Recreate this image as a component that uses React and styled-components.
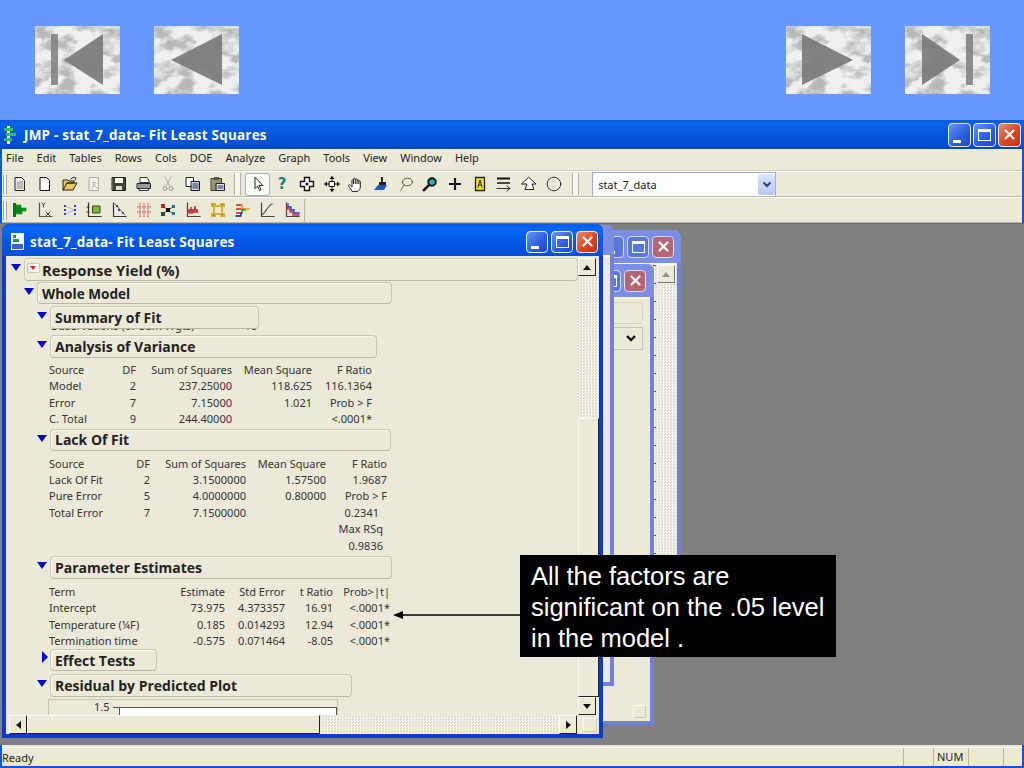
import React from "react";
import styled, { createGlobalStyle } from "styled-components";

const GlobalStyle = createGlobalStyle`
  html, body { margin: 0; padding: 0; background: #6699ff; }
  body { font-family: "Noto Sans", "Liberation Sans", sans-serif; }
`;

/* ---------- slide nav ---------- */

function Marble({ id, tri, bar }) {
  return (
    <TileSvg viewBox="0 0 85 68">
      <defs>
        <filter id={id} x="0" y="0" width="100%" height="100%">
          <feTurbulence type="fractalNoise" baseFrequency="0.05 0.08" numOctaves="5" seed="11" />
          <feColorMatrix values="0 0 0 0 0.48  0 0 0 0 0.48  0 0 0 0 0.48  3 3 0 0 -2.75" />
        </filter>
      </defs>
      <rect width="85" height="68" fill="#f0f0ef" />
      <rect width="85" height="68" filter={`url(#${id})`} />
      {bar && <rect x={bar} y="8" width="7" height="51" fill="#7d8084" opacity="0.88" />}
      <polygon points={tri} fill="#77797b" opacity="0.92" />
    </TileSvg>
  );
}

/* ---------- toolbar icons ---------- */

const S = ({ children }) => (
  <svg width="16" height="16" viewBox="0 0 16 16" fill="none" strokeLinecap="square">
    {children}
  </svg>
);

const Axes = ({ c = "#555" }) => <path d="M2.5 1v13.5H15" stroke={c} strokeWidth="1.2" />;

const tools = {
  doc: (
    <S>
      <path d="M3.5 1.5h6l3 3v10h-9z" fill="#fff" stroke="#222" />
      <path d="M5 6h6M5 8h6M5 10h6M5 12h6" stroke="#777" />
    </S>
  ),
  page: (
    <S>
      <path d="M3.5 1.5h6l3 3v10h-9z" fill="#fff" stroke="#111" />
    </S>
  ),
  open: (
    <S>
      <path d="M1 14V4h5l1 1h5v2H5l-4 7h10l4-7H5" fill="#e6c95a" stroke="#222" />
      <path d="M9 3c1-2 3-2 5-1l-1 2" stroke="#222" />
    </S>
  ),
  script: (
    <S>
      <path d="M3.5 1.5h9v13h-9z" fill="#f2f1ea" stroke="#aaa" />
      <path d="M6 12l2-3-1-3 3 1M8 9l3 3" stroke="#b9a79a" />
    </S>
  ),
  save: (
    <S>
      <path d="M1.5 1.5h13v13h-13z" fill="#44452c" stroke="#222" />
      <path d="M4 2h8v5H4z" fill="#fff" />
      <path d="M5 10h6v4H5z" fill="#ddd" />
    </S>
  ),
  print: (
    <S>
      <path d="M4.500 1.500h7l2 5h-9z" fill="#fff" stroke="#333" />
      <path d="M1.500 7.500h13v5h-13z" fill="#999" stroke="#222" />
      <path d="M3.500 12.500h9v2h-9z" fill="#eee" stroke="#333" />
    </S>
  ),
  cut: (
    <S>
      <path d="M5 1l5 9M11 1l-5 9" stroke="#aaa" />
      <circle cx="5" cy="12.500" r="2" stroke="#999" />
      <circle cx="11" cy="12.500" r="2" stroke="#999" />
    </S>
  ),
  copy: (
    <S>
      <path d="M1.500 1.500h7v9h-7z" fill="#fff" stroke="#222" />
      <path d="M6.500 5.500h8v9h-8z" fill="#d8def5" stroke="#112" />
      <path d="M8 8h5M8 10h5M8 12h5" stroke="#224" />
    </S>
  ),
  paste: (
    <S>
      <path d="M1.500 2.500h10v12h-10z" fill="#9b9468" stroke="#333" />
      <path d="M4 1h5v3H4z" fill="#555" />
      <path d="M6.500 7.500h8v7h-8z" fill="#e4e8fa" stroke="#223" />
      <path d="M8 10h5M8 12h5" stroke="#225" />
    </S>
  ),
  arrow: (
    <S>
      <path d="M5 1.500v11l2.500-2.500 2 4.500 1.500-.8-2-4.200h3.500z" fill="#fff" stroke="#222" strokeLinecap="round" strokeLinejoin="round" />
    </S>
  ),
  cross: (
    <S>
      <path d="M5.500 1.500h5v4h4v5h-4v4h-5v-4h-4v-5h4z" fill="#fff" stroke="#111" strokeWidth="1.4" />
      <circle cx="8" cy="8" r="1.600" fill="#111" />
    </S>
  ),
  move: (
    <S>
      <path d="M8 1v14M1 8h14" stroke="#111" />
      <path d="M8 0l2.500 3h-5zM8 16l2.500-3h-5zM0 8l3-2.500v5zM16 8l-3-2.500v5z" fill="#111" />
      <path d="M5.500 5.500h5v5h-5z" fill="#fff" stroke="#111" />
    </S>
  ),
  hand: (
    <S>
      <path d="M4 15c-1-2-3.500-4.500-3.500-5.500 0-1 1-1 2 0L4 11V4.500c0-1 1.500-1 1.500 0V3c0-1 1.800-1 1.800 0v.500c0-1 1.800-1 1.800 0v1c0-1 1.700-1 1.700 0V5.500c0-1 1.500-1 1.500 0V11c0 2-1 3-2 4z" fill="#fff" stroke="#222" strokeLinejoin="round" />
      <path d="M5.500 4.500V8M7.300 3.500V8M9.100 4.500V8M10.800 5.500V8" stroke="#222" strokeLinecap="butt" />
    </S>
  ),
  brush: (
    <S>
      <path d="M8 1h2v5h3v3H6V6h2z" fill="#222" />
      <path d="M5 9h9l-3 5H1z" fill="#1e4fd8" />
    </S>
  ),
  lasso: (
    <S>
      <ellipse cx="9.500" cy="6" rx="5" ry="3.800" stroke="#555" />
      <path d="M6 9.500C4 10 5 12 3 14" stroke="#555" />
    </S>
  ),
  glass: (
    <S>
      <circle cx="10" cy="6" r="3.800" fill="#18b6c2" stroke="#111" strokeWidth="1.900" />
      <path d="M7 9l-5 5" stroke="#111" strokeWidth="2.600" />
    </S>
  ),
  plus: (
    <S>
      <path d="M8 2v12M2 8h12" stroke="#111" strokeWidth="2.200" strokeLinecap="butt" />
    </S>
  ),
  annot: (
    <S>
      <path d="M3.500 1.500h9v13h-9z" fill="#f0e41c" stroke="#222" strokeWidth="1.300" />
      <path d="M6 11l2-7 2 7M6.800 9h2.400" stroke="#222" />
    </S>
  ),
  lines: (
    <S>
      <path d="M1 2.500h13" stroke="#111" strokeWidth="2" strokeLinecap="butt" />
      <path d="M1 7h13" stroke="#111" strokeWidth="1.500" strokeLinecap="butt" />
      <path d="M1 12.500h13M11 10l3 2.500-3 2.500" stroke="#333" />
    </S>
  ),
  poly: (
    <S>
      <path d="M8 1.500l7 6.500-4 0 2 5.500H4l2-5.500H1z" fill="#fff" stroke="#222" strokeLinejoin="round" />
    </S>
  ),
  circle: (
    <S>
      <circle cx="8" cy="8" r="6.800" fill="none" stroke="#333" />
    </S>
  ),
  dist: (
    <S>
      <path d="M1 1h3v14H1z" fill="#0a7a10" />
      <path d="M4 3h5v3H4zM4 6h10v3H4zM4 9h6v3H4z" fill="#0a9a14" stroke="#063" strokeWidth=".5" />
    </S>
  ),
  yx: (
    <S>
      <Axes />
      <path d="M9 10l4 4M13 10l-4 4" stroke="#444" />
      <path d="M5 1l1.500 2L8 1M6.500 3v2" stroke="#444" />
    </S>
  ),
  dots: (
    <S>
      <path d="M2 3h2v2H2zM2 11h2v2H2zM12 3h2v2h-2zM12 11h2v2h-2zM2 7h2v2H2zM12 7h2v2h-2z" fill="#3533c8" />
      <path d="M4 4l8 4-8 4" stroke="#b3b3e8" />
    </S>
  ),
  square: (
    <S>
      <Axes c="#333" />
      <path d="M7 4h7v7H7z" fill="#7dbb2d" stroke="#343" />
      <path d="M1 5h2M1 10h2" stroke="#333" />
    </S>
  ),
  points: (
    <S>
      <Axes c="#333" />
      <path d="M5 3h2v2H5zM7 7h2v2H7zM11 10h2v2h-2z" fill="#3533a8" />
      <path d="M4 2l10 11" stroke="#555" />
    </S>
  ),
  grid: (
    <S>
      <path d="M4 1v14M8 1v14M12 1v14M1 5h14M1 10h14" stroke="#c2332d" strokeDasharray="1.500 1" strokeLinecap="butt" />
    </S>
  ),
  net: (
    <S>
      <path d="M3 4l5 4 5-3M3 12l5-4 5 4" stroke="#444" />
      <path d="M1 2h4v4H1z" fill="#b22" />
      <path d="M1 10h4v4H1z" fill="#162" />
      <path d="M6 6h4v4H6z" fill="#111" />
      <path d="M12 3h3v3h-3zM12 10h3v3h-3z" fill="#17a" />
    </S>
  ),
  wave: (
    <S>
      <Axes c="#444" />
      <path d="M3 11l1-4 1 5 1-7 1 7 1-5 1 4 1-7 1 7 1-4 1 4" stroke="#c8262b" strokeLinecap="butt" />
    </S>
  ),
  yellow: (
    <S>
      <path d="M1 1h5v4H1zM10 1h5v4h-5zM1 11h5v4H1zM10 11h5v4h-5zM6 3h4v2H6zM6 11h4v2H6zM3 5h2v6H3zM11 5h2v6h-2z" fill="#d4b02c" />
      <path d="M2 2h1v1H2zM12 2h1v1h-1zM3 13h1v1H3zM12 12h1v1h-1z" fill="#6b5a20" />
    </S>
  ),
  tree: (
    <S>
      <path d="M1 3h6M1 7h8M1 11h6M1 14h5" stroke="#c22" strokeWidth="1.500" strokeLinecap="butt" />
      <path d="M7 3v4h7" stroke="#d9a010" strokeWidth="1.500" />
      <path d="M7 11v-3h3" stroke="#1a9a2a" strokeWidth="1.500" />
      <path d="M1 14h5v-3" stroke="#2233bb" strokeWidth="1.500" />
    </S>
  ),
  sigmoid: (
    <S>
      <Axes c="#444" />
      <path d="M3 13c5 0 4-10 11-11" stroke="#888" />
      <path d="M3 13L12 2" stroke="#444" />
    </S>
  ),
  steps: (
    <S>
      <Axes c="#444" />
      <path d="M4 2v3h3v3h3v3h5" stroke="#2233cc" strokeWidth="1.300" />
      <path d="M3 4v3h3v3h3v3h6" stroke="#d8232a" strokeWidth="1.300" />
    </S>
  ),
};

/* ---------- report data ---------- */

const anova = [
  ["Source", "DF", "Sum of Squares", "Mean Square", "F Ratio"],
  ["Model", "2", "237.25000", "118.625", "116.1364"],
  ["Error", "7", "7.15000", "1.021", "Prob > F"],
  ["C. Total", "9", "244.40000", "", "<.0001*"],
];

const lackOfFit = [
  ["Source", "DF", "Sum of Squares", "Mean Square", "F Ratio"],
  ["Lack Of Fit", "2", "3.1500000", "1.57500", "1.9687"],
  ["Pure Error", "5", "4.0000000", "0.80000", "Prob > F"],
  ["Total Error", "7", "7.1500000", "", "0.2341"],
  ["", "", "", "", "Max RSq"],
  ["", "", "", "", "0.9836"],
];

const params = [
  ["Term", "Estimate", "Std Error", "t Ratio", "Prob>|t|"],
  ["Intercept", "73.975", "4.373357", "16.91", "<.0001*"],
  ["Temperature (¼F)", "0.185", "0.014293", "12.94", "<.0001*"],
  ["Termination time", "-0.575", "0.071464", "-8.05", "<.0001*"],
];

function StatTable({ rows, cols, top, pads = {} }) {
  return (
    <Table $cols={cols} $top={top}>
      {rows.map((row, r) =>
        row.map((cell, c) => (
          <Cell key={`${r}-${c}`} $left={c === 0} $pad={c === 4 ? pads[r] : 0}>
            {cell}
          </Cell>
        ))
      )}
    </Table>
  );
}

function Node({ indent, top, width, height = 23, closed, menu, size, children }) {
  return (
    <NodeRow $indent={indent} $top={top}>
      <Disclosure $closed={closed} />
      <NodeHead $width={width} $height={height} $size={size}>
        {menu && <RedMenu />}
        {children}
      </NodeHead>
    </NodeRow>
  );
}

function Caption({ faded, large, right = 0 }) {
  const icon = (
    <svg width="11" height="11" viewBox="0 0 11 11">
      <path d="M1.500 1.500l8 8M9.500 1.500l-8 8" stroke="#fff" strokeWidth="2.200" strokeLinecap="round" />
    </svg>
  );
  return (
    <CaptionGroup $large={large} $right={right}>
      <CapBtn $faded={faded} $large={large}><MinBar /></CapBtn>
      <CapBtn $faded={faded} $large={large}><MaxBox /></CapBtn>
      <CapBtn $faded={faded} $large={large} $close>{icon}</CapBtn>
    </CaptionGroup>
  );
}

export default function App() {
  return (
    <Page>
      <GlobalStyle />
      <Nav>
        <NavGroup>
          <Marble id="m1" bar={16} tri="29,34 68,8 68,59" />
          <Marble id="m2" tri="17,34 68,8 68,59" />
        </NavGroup>
        <NavGroup>
          <Marble id="m3" tri="16,8 16,59 67,34" />
          <Marble id="m4" bar={61} tri="17,8 17,59 55,34" />
        </NavGroup>
      </Nav>

      <AppWindow>
        <AppTitle>
          <svg width="13" height="18" viewBox="0 0 13 18">
            <path d="M4 0h3v18H4z" fill="#e9f4d9" />
            <path d="M1 2h9v3H1zM3 7h10v3H3zM1 12h8v3H1z" fill="#35c048" />
          </svg>
          <AppTitleText>JMP - stat_7_data- Fit Least Squares</AppTitleText>
          <Caption large />
        </AppTitle>

        <MenuBar>
          {["File", "Edit", "Tables", "Rows", "Cols", "DOE", "Analyze", "Graph", "Tools", "View", "Window", "Help"].map((m) => (
            <MenuItem key={m}>{m}</MenuItem>
          ))}
        </MenuBar>

        <ToolRow>
          <Grip />
          {["doc", "page", "open", "script", "save", "print", "cut", "copy", "paste"].map((k) => (
            <ToolBtn key={k}>{tools[k]}</ToolBtn>
          ))}
          <ToolSep />
          <ToolBtn $active>{tools.arrow}</ToolBtn>
          <ToolBtn><Help>?</Help></ToolBtn>
          {["cross", "move", "hand", "brush", "lasso", "glass", "plus", "annot", "lines", "poly", "circle"].map((k) => (
            <ToolBtn key={k}>{tools[k]}</ToolBtn>
          ))}
          <ToolSep $wide />
          <Combo>
            <ComboText>stat_7_data</ComboText>
            <ComboBtn>
              <svg width="10" height="8" viewBox="0 0 10 8">
                <path d="M1.500 1.500L5 5l3.500-3.500" stroke="#2b3f7a" strokeWidth="2" fill="none" />
              </svg>
            </ComboBtn>
          </Combo>
        </ToolRow>

        <ToolRow $second>
          <Grip />
          {["dist", "yx", "dots", "square", "points", "grid", "net", "wave", "yellow", "tree", "sigmoid", "steps"].map((k) => (
            <ToolBtn key={k}>{tools[k]}</ToolBtn>
          ))}
          <EndLine />
        </ToolRow>

        <Mdi>
          {/* back windows */}
          <ChildWin $left={120} $top={6} $w={561} $h={420}>
            <ChildTitle $faded $h={33}><Caption faded right={2} /></ChildTitle>
            <BackBody>
              <BackFill />
              <TickedTrack>
                <ScrollBtn $dir="up" $faded />
              </TickedTrack>
            </BackBody>
          </ChildWin>
          <ChildWin $left={100} $top={40} $w={554} $h={461}>
            <ChildTitle $faded $h={33}><Caption faded right={3} /></ChildTitle>
            <BackBody>
              <BackContent>
                <BackPill />
                <BackSelect>
                  <svg width="12" height="9" viewBox="0 0 12 9">
                    <path d="M2 2l4 4 4-4" stroke="#111" strokeWidth="2.400" fill="none" />
                  </svg>
                </BackSelect>
                <BackCorner />
              </BackContent>
            </BackBody>
          </ChildWin>
          <ChildWin $left={60} $top={1} $w={554} $h={461}>
            <ChildTitle $faded $h={30} />
            <BackBody />
          </ChildWin>

          {/* active report window */}
          <ChildWin $active $left={2} $top={0} $w={601} $h={514}>
            <ChildTitle $h={32} $shift>
              <svg width="15" height="17" viewBox="0 0 15 17">
                <path d="M1 0h13v17H1z" fill="#fff" />
                <path d="M3 2h3v3H3zM3 6h6v3H3z" fill="#1f9a3a" />
                <path d="M2 11h11v5H2z" fill="#3a62c8" />
              </svg>
              <ChildTitleText>stat_7_data- Fit Least Squares</ChildTitleText>
              <Caption />
            </ChildTitle>
            <ReportBody>
              <Report>
                <Node indent={5} top={2} width={554} menu size={14.8}>Response Yield (%)</Node>
                <Node indent={18} top={1} width={355} height={22} size={13.6}>Whole Model</Node>
                <Node indent={31} top={2} width={209}>Summary of Fit</Node>
                <ClippedLine>
                  <span>Observations (or Sum Wgts)</span>
                  <span>10</span>
                </ClippedLine>
                <Node indent={31} top={2} width={327}>Analysis of Variance</Node>
                <StatTable rows={anova} cols="63px 24px 96px 80px 60px" top={4} />
                <Node indent={31} top={1} width={341} height={22}>Lack Of Fit</Node>
                <StatTable
                  rows={lackOfFit}
                  cols="77px 24px 96px 80px 61px"
                  top={5}
                  pads={{ 3: 8, 4: 4, 5: 4 }}
                />
                <Node indent={31} top={2} width={342}>Parameter Estimates</Node>
                <StatTable rows={params} cols="116px 60px 60px 48px 57px" top={5} />
                <Node indent={31} top={0} width={107} height={22} closed>Effect Tests</Node>
                <Node indent={31} top={3} width={302}>Residual by Predicted Plot</Node>
                <PlotFrame>
                  <PlotLabel>1.5</PlotLabel>
                  <PlotTick />
                  <PlotArea />
                </PlotFrame>
              </Report>

              <VScroll>
                <ScrollBtn $dir="up" />
                <Track $size={142} />
                <Thumb />
                <ScrollBtn $dir="down" />
              </VScroll>
              <HScroll>
                <ScrollBtn $dir="left" />
                <HThumb />
                <Track />
                <ScrollBtn $dir="right" />
              </HScroll>
              <SizeCorner><CornerBox /></SizeCorner>
            </ReportBody>
          </ChildWin>
        </Mdi>

        <StatusBar>
          <StatusText>Ready</StatusText>
          <StatusCell $w={30} />
          <StatusCell $w={35}>NUM</StatusCell>
          <StatusCell $w={35} />
          <StatusCell $w={19} />
        </StatusBar>
      </AppWindow>

      <PointerArrow width="130" height="12" viewBox="0 0 130 12">
        <path d="M0 6l10-4v8z" fill="#000" />
        <path d="M8 6h122" stroke="#000" strokeWidth="1.300" />
      </PointerArrow>
      <Callout>
        All the factors are
        <br />
        significant on the .05 level
        <br />
        in the model .
      </Callout>
    </Page>
  );
}

/* ---------- styles ---------- */

const Page = styled.div`
  position: relative;
  width: 1024px;
  height: 768px;
  overflow: hidden;
  display: flex;
  flex-direction: column;
  background: #6699ff;
`;

const Nav = styled.div`
  height: 120px;
  flex: none;
  box-sizing: border-box;
  padding: 26px 34px 0 35px;
  display: flex;
  justify-content: space-between;
`;

const NavGroup = styled.div`
  display: flex;
  gap: 34px;
  height: 68px;
`;

const TileSvg = styled.svg`
  width: 85px;
  height: 68px;
  display: block;
`;

const AppWindow = styled.div`
  flex: 1;
  display: flex;
  flex-direction: column;
  min-height: 0;
  background: #ece9d8;
  border: solid #0a55e0;
  border-width: 0 2px 2px;
`;

const AppTitle = styled.div`
  height: 29px;
  flex: none;
  margin: 0 -2px;
  padding: 0 3px;
  display: flex;
  align-items: center;
  background: linear-gradient(#0a5ad8 0%, #0a62ea 12%, #0558dc 50%, #0350d2 85%, #0346b8 100%);
`;

const AppTitleText = styled.div`
  margin-left: 8px;
  flex: 1;
  color: #fff;
  font: 700 13.5px "Open Sans", "DejaVu Sans", sans-serif;
  letter-spacing: 0.2px;
`;

const CaptionGroup = styled.div`
  display: flex;
  gap: ${(p) => (p.$large ? "2px" : "3px")};
  margin-left: auto;
  margin-right: ${(p) => p.$right}px;
`;

const CapBtn = styled.div`
  width: ${(p) => (p.$large ? "23px" : "22px")};
  height: ${(p) => (p.$large ? "24px" : "22px")};
  box-sizing: border-box;
  border: 1px solid ${(p) => (p.$faded ? "#d8dcf4" : "#e8f0ff")};
  border-radius: 4px;
  display: flex;
  align-items: center;
  justify-content: center;
  position: relative;
  background: ${(p) =>
    p.$close
      ? p.$faded
        ? "#b56674"
        : "linear-gradient(135deg, #ea8a68, #d8431f 60%, #c23410)"
      : p.$faded
      ? "#5a78dc"
      : "linear-gradient(135deg, #6c96ee, #2c5be0 60%, #1f47c8)"};
`;

const MinBar = styled.div`
  position: absolute;
  left: 4px;
  bottom: 3px;
  width: 8px;
  height: 3px;
  background: #fff;
`;

const MaxBox = styled.div`
  width: 13px;
  height: 12px;
  box-sizing: border-box;
  border: 1px solid #fff;
  border-top-width: 3px;
`;

const MenuBar = styled.div`
  height: 22px;
  flex: none;
  box-sizing: border-box;
  display: flex;
  align-items: center;
  padding: 0 0 3px 4px;
  gap: 13px;
  font-size: 11px;
  color: #222;
  border-bottom: 1px solid #d6d2bd;
`;

const MenuItem = styled.span`
  line-height: 18px;
`;

const ToolRow = styled.div`
  height: 26px;
  flex: none;
  box-sizing: border-box;
  display: flex;
  align-items: center;
  border-top: 1px solid #fff;
  border-bottom: 1px solid #b9b6a2;
`;

const Grip = styled.div`
  width: 4px;
  height: 19px;
  margin: 0 1px 0 1px;
  border: solid #a7a48f;
  border-width: 0 1px 0 1px;
  background: #f7f6ef;
  box-sizing: border-box;
`;

const ToolBtn = styled.div`
  width: 24.7px;
  height: 23px;
  flex: none;
  box-sizing: border-box;
  display: flex;
  align-items: center;
  justify-content: center;
  ${(p) =>
    p.$active &&
    `background: #f8f8f4; border: 1px solid #9db0d8; border-radius: 3px;`}
`;

const Help = styled.span`
  font: 700 15px "DejaVu Sans", sans-serif;
  color: #14808a;
`;

const ToolSep = styled.div`
  width: 7px;
  height: 22px;
  margin: 0 ${(p) => (p.$wide ? "13px" : "4px")} 0 ${(p) => (p.$wide ? "6px" : "4px")};
  box-sizing: border-box;
  border: solid #b5b29e;
  border-width: 0 1px;
  background: #f7f6ef;
`;

const EndLine = styled.div`
  width: 1px;
  height: 23px;
  background: #b9b6a2;
`;

const Combo = styled.div`
  width: 184px;
  height: 24px;
  box-sizing: border-box;
  display: flex;
  align-items: center;
  background: #fff;
  border: 1px solid #9aaed8;
  border-bottom: 0;
`;

const ComboText = styled.span`
  flex: 1;
  padding-left: 5px;
  font-size: 11px;
  color: #222;
`;

const ComboBtn = styled.div`
  width: 17px;
  height: 21px;
  display: flex;
  align-items: center;
  justify-content: center;
  border-radius: 2px;
  background: linear-gradient(#dbe5fb, #b4c7f2);
`;

const Mdi = styled.div`
  position: relative;
  flex: 1;
  min-height: 0;
  margin: 0 -2px 2px;
  background: #808080;
  border-top: 1px solid #6a6a6a;
  overflow: hidden;
`;

const ChildWin = styled.div`
  position: absolute;
  left: ${(p) => p.$left}px;
  top: ${(p) => p.$top}px;
  width: ${(p) => p.$w}px;
  height: ${(p) => p.$h}px;
  box-sizing: border-box;
  display: flex;
  flex-direction: column;
  border: 4px solid ${(p) => (p.$active ? "#0a3ad0" : "#7080dc")};
  border-top: 0;
  border-radius: 7px 7px 0 0;
  background: #ece9d8;
`;

const ChildTitle = styled.div`
  height: ${(p) => p.$h}px;
  flex: none;
  box-sizing: border-box;
  margin: 0 -4px;
  padding: ${(p) => (p.$shift ? "3px" : "0")} 5px 0 8px;
  border-radius: 7px 7px 0 0;
  display: flex;
  align-items: center;
  background: ${(p) =>
    p.$faded
      ? "#7a8fe4"
      : "linear-gradient(#0a5ae8 0%, #0a68f6 15%, #0458e6 55%, #0650d8 100%)"};
`;

const ChildTitleText = styled.div`
  margin-left: 5px;
  color: #fff;
  font: 700 13.5px "Open Sans", "DejaVu Sans", sans-serif;
  letter-spacing: 0.2px;
`;

const BackBody = styled.div`
  flex: 1;
  min-height: 0;
  display: flex;
  background: #ece9d8;
  border-top: 2px solid #f8f7f1;
`;

const BackFill = styled.div`
  flex: 1;
`;

const BackContent = styled.div`
  flex: 1;
  position: relative;
  display: flex;
  flex-direction: column;
  align-items: flex-end;
  padding: 3px 7px 0 0;
  gap: 3px;
`;

const BackPill = styled.div`
  width: 120px;
  height: 20px;
  border: 1px solid #d2cfbb;
  border-radius: 4px;
`;

const BackSelect = styled.div`
  width: 120px;
  height: 23px;
  box-sizing: border-box;
  border: 1px solid #c6c3ae;
  display: flex;
  align-items: center;
  justify-content: flex-end;
  padding-right: 5px;
`;

const BackCorner = styled.div`
  position: absolute;
  right: 4px;
  bottom: 3px;
  width: 11px;
  height: 11px;
  border: 1px solid #f8f7f1;
  border-right-color: #cfcbb8;
  border-bottom-color: #cfcbb8;
`;

const checker = `
  background-color: #e8e6da;
  background-image: repeating-conic-gradient(#f6f5ee 0 25%, #dcdacd 0 50%);
  background-size: 3px 3px;
`;

const TickedTrack = styled.div`
  width: 20px;
  padding-left: 4px;
  ${checker}
  background-image:
    repeating-linear-gradient(#555 0 1px, transparent 1px 18px),
    repeating-conic-gradient(#f6f5ee 0 25%, #dcdacd 0 50%);
  background-size: 3px 100%, 3px 3px;
  background-repeat: no-repeat, repeat;
`;

const ReportBody = styled.div`
  flex: 1;
  min-height: 0;
  display: grid;
  grid-template-columns: 1fr 19px;
  grid-template-rows: 1fr 19px;
  background: #ece9d8;
`;

const Report = styled.div`
  min-width: 0;
  min-height: 0;
  overflow: hidden;
  display: flex;
  flex-direction: column;
  color: #333;
  font-size: 11px;
`;

const NodeRow = styled.div`
  flex: none;
  display: flex;
  margin-left: ${(p) => p.$indent}px;
  margin-top: ${(p) => p.$top}px;
`;

const Disclosure = styled.div`
  width: 13px;
  flex: none;
  height: 10px;
  margin-top: ${(p) => (p.$closed ? "2px" : "6px")};
  position: relative;
  &::before {
    content: "";
    position: absolute;
    left: ${(p) => (p.$closed ? "5px" : "0")};
    top: 0;
    border: solid transparent;
    border-width: ${(p) => (p.$closed ? "6px 0 6px 6px" : "7px 5.5px 0 5.5px")};
    ${(p) => (p.$closed ? "border-left-color: #0000d8;" : "border-top-color: #0000c8;")}
  }
`;

const NodeHead = styled.div`
  width: ${(p) => p.$width}px;
  height: ${(p) => p.$height}px;
  box-sizing: border-box;
  flex: none;
  display: flex;
  align-items: center;
  padding-left: 4px;
  border: 1px solid #c9c6b2;
  border-radius: 4px;
  border-bottom-color: #b9b6a2;
  box-shadow: inset 1px 1px 0 #f7f6ef;
  font: 700 ${(p) => p.$size || 14}px "Open Sans", "DejaVu Sans", sans-serif;
  color: #222;
`;

const RedMenu = styled.div`
  width: 13px;
  height: 10px;
  margin: -4px 2px 0 -2px;
  box-sizing: border-box;
  border: 1px solid #c9c6b2;
  border-radius: 2px;
  background: #f8f7f1;
  position: relative;
  &::after {
    content: "";
    position: absolute;
    left: 2px;
    top: 2px;
    border: solid transparent;
    border-width: 4px 3px 0 3px;
    border-top-color: #d81e1e;
  }
`;

const ClippedLine = styled.div`
  height: 4px;
  flex: none;
  overflow: hidden;
  display: flex;
  justify-content: space-between;
  width: 209px;
  margin-left: 44px;
  box-sizing: border-box;
  padding-right: 2px;
  line-height: 14px;
  & > span {
    margin-top: -10px;
    display: block;
  }
`;

const Table = styled.div`
  display: grid;
  grid-template-columns: ${(p) => p.$cols};
  grid-auto-rows: 16.4px;
  margin: ${(p) => p.$top}px 0 0 43px;
  line-height: 16.4px;
  flex: none;
`;

const Cell = styled.div`
  text-align: ${(p) => (p.$left ? "left" : "right")};
  padding-right: ${(p) => p.$pad || 0}px;
  white-space: nowrap;
`;

const PlotFrame = styled.div`
  width: 290px;
  height: 20px;
  flex: none;
  margin: 2px 0 0 42px;
  box-sizing: border-box;
  border: 1px solid #c9c6b2;
  display: flex;
  align-items: flex-start;
  padding-left: 45px;
`;

const PlotLabel = styled.span`
  line-height: 14px;
`;

const PlotTick = styled.div`
  width: 6px;
  height: 1px;
  margin: 7px 0 0 3px;
  background: #555;
`;

const PlotArea = styled.div`
  flex: 1;
  height: 14px;
  margin-top: 7px;
  background: #fff;
  border: 1px solid #555;
  border-bottom: 0;
  box-sizing: border-box;
`;

const bevel = `
  box-sizing: border-box;
  background-color: #ece9d8;
  border: 1px solid;
  border-color: #fbfaf4 #222 #222 #fbfaf4;
`;

const arrows = {
  up: "border-width: 0 4px 5px; border-bottom-color: #111;",
  down: "border-width: 5px 4px 0; border-top-color: #111;",
  left: "border-width: 4px 5px 4px 0; border-right-color: #111;",
  right: "border-width: 4px 0 4px 5px; border-left-color: #111;",
};

const ScrollBtn = styled.div`
  ${bevel}
  width: 18px;
  height: 18px;
  flex: none;
  display: flex;
  align-items: center;
  justify-content: center;
  ${(p) => p.$faded && "border-color: #fbfaf4 #777 #777 #fbfaf4;"}
  &::after {
    content: "";
    border: solid transparent;
    ${(p) => arrows[p.$dir]}
    ${(p) => p.$faded && "opacity: 0.4;"}
  }
`;

const VScroll = styled.div`
  display: flex;
  flex-direction: column;
  padding-top: 2px;
  margin-left: -2px;
  min-height: 0;
`;

const HScroll = styled.div`
  display: flex;
  padding: 0 3px 0 3px;
  align-items: stretch;
  & > ${ScrollBtn} {
    height: auto;
  }
`;

const Track = styled.div`
  ${checker}
  flex: ${(p) => (p.$size ? `0 0 ${p.$size}px` : "1")};
`;

const Thumb = styled.div`
  ${bevel}
  flex: 1;
`;

const HThumb = styled.div`
  ${bevel}
  width: 293px;
  flex: none;
`;

const SizeCorner = styled.div`
  display: flex;
  align-items: center;
  justify-content: center;
`;

const CornerBox = styled.div`
  width: 12px;
  height: 12px;
  border: 1px solid #f8f7f1;
  border-right-color: #cfcbb8;
  border-bottom-color: #cfcbb8;
`;

const StatusBar = styled.div`
  height: 19px;
  flex: none;
  box-sizing: border-box;
  display: flex;
  align-items: center;
  font-size: 11px;
  color: #222;
  border-top: 1px solid #fff;
`;

const StatusText = styled.div`
  flex: 1;
`;

const StatusCell = styled.div`
  width: ${(p) => p.$w}px;
  height: 18px;
  line-height: 18px;
  box-sizing: border-box;
  padding-left: 3px;
  border-left: 1px solid #b9b6a2;
`;

const PointerArrow = styled.svg`
  position: absolute;
  left: 393px;
  top: 609px;
`;

const Callout = styled.div`
  position: absolute;
  left: 520px;
  top: 555px;
  width: 316px;
  height: 102px;
  box-sizing: border-box;
  padding: 6px 0 0 11px;
  background: #000;
  color: #fff;
  font: 25.5px/31px "Liberation Sans", Arial, sans-serif;
  white-space: nowrap;
`;
